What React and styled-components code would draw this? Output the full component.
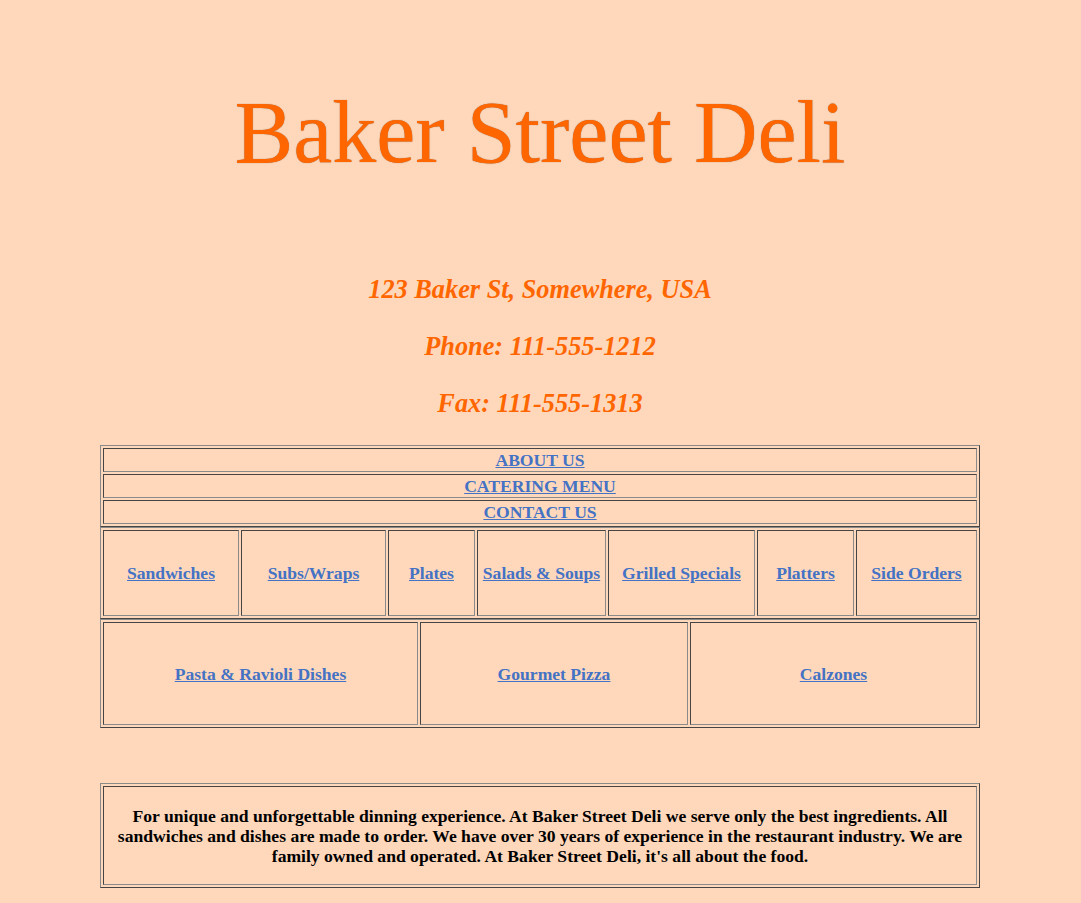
import React from "react";
import styled, { createGlobalStyle } from "styled-components";

const GlobalStyle = createGlobalStyle`
  html, body {
    margin: 0;
    padding: 0;
  }
  body {
    margin: 8px;
    background: #ffd8bb;
    font-family: "Liberation Serif", "Times New Roman", serif;
    color: #000;
  }
`;

const LIGHT = "#8a8a8a";
const DARK = "#454545";

const Page = styled.div`
  display: flex;
  flex-direction: column;
  align-items: center;
  padding-top: 75px;
  padding-right: 1px;
`;

const Title = styled.h1`
  margin: 0;
  font-size: 88px;
  line-height: 100px;
  font-weight: normal;
  color: #ff6600;
  text-shadow: 0 0 1px rgba(70, 50, 40, 0.65);
  text-align: center;
`;

const Contact = styled.div`
  margin-top: 92px;
  display: flex;
  flex-direction: column;
  align-items: center;
  gap: 27px;
`;

const ContactLine = styled.h2`
  margin: 0;
  font-size: 26.3px;
  line-height: 30px;
  font-weight: bold;
  font-style: italic;
  color: #ff6600;
`;

const Frame = styled.div`
  box-sizing: border-box;
  width: 880px;
  display: flex;
  flex-direction: ${(p) => (p.$column ? "column" : "row")};
  gap: 2px;
  padding: 2px;
  border: 1px solid;
  border-color: ${LIGHT} ${DARK} ${DARK} ${LIGHT};
  margin-top: ${(p) => p.$mt || 0}px;
`;

const Cell = styled.div`
  box-sizing: border-box;
  flex: ${(p) => (p.$w ? `0 0 ${p.$w}px` : "1 1 auto")};
  height: ${(p) => p.$h}px;
  border: 1px solid;
  border-color: ${DARK} ${LIGHT} ${LIGHT} ${DARK};
  display: flex;
  align-items: center;
  justify-content: center;
  padding: 1px;
`;

const NavLink = styled.a`
  font-size: 17.6px;
  line-height: 20px;
  font-weight: bold;
  color: #4472c4;
  text-decoration: underline;
  white-space: nowrap;
`;

const About = styled.p`
  margin: 0;
  padding: 0 1px;
  font-size: 17.6px;
  line-height: 20px;
  font-weight: bold;
  text-align: center;
`;

const topLinks = ["ABOUT US", "CATERING MENU", "CONTACT US"];

const menuRow1 = [
  ["Sandwiches", 136],
  ["Subs/Wraps", 145],
  ["Plates", 87],
  ["Salads & Soups", 129],
  ["Grilled Specials", 147],
  ["Platters", 97],
  ["Side Orders", 121],
];

const menuRow2 = [
  ["Pasta & Ravioli Dishes", 315],
  ["Gourmet Pizza", 268],
  ["Calzones", 287],
];

export default function App() {
  return (
    <>
      <GlobalStyle />
      <Page>
        <Title>Baker Street Deli</Title>
        <Contact>
          <ContactLine>123 Baker St, Somewhere, USA</ContactLine>
          <ContactLine>Phone: 111-555-1212</ContactLine>
          <ContactLine>Fax: 111-555-1313</ContactLine>
        </Contact>

        <Frame $column $mt={26}>
          {topLinks.map((t) => (
            <Cell key={t} $h={24}>
              <NavLink href="#">{t}</NavLink>
            </Cell>
          ))}
        </Frame>
        <Frame>
          {menuRow1.map(([t, w]) => (
            <Cell key={t} $w={w} $h={86}>
              <NavLink href="#">{t}</NavLink>
            </Cell>
          ))}
        </Frame>
        <Frame>
          {menuRow2.map(([t, w]) => (
            <Cell key={t} $w={w} $h={103}>
              <NavLink href="#">{t}</NavLink>
            </Cell>
          ))}
        </Frame>

        <Frame $mt={55}>
          <Cell $h={99}>
            <About>
              For unique and unforgettable dinning experience. At Baker Street
              Deli we serve only the best ingredients. All sandwiches and dishes
              are made to order. We have over 30 years of experience in the
              restaurant industry. We are family owned and operated. At Baker
              Street Deli, it's all about the food.
            </About>
          </Cell>
        </Frame>
      </Page>
    </>
  );
}
